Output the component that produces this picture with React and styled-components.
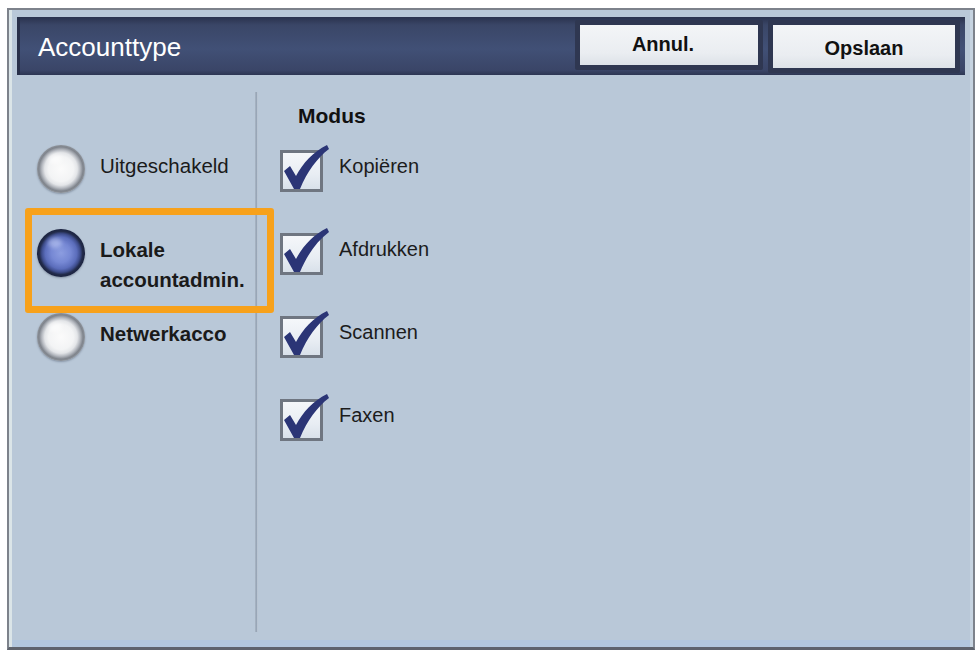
import React from "react";
import styled, { createGlobalStyle } from "styled-components";

const Global = createGlobalStyle`
  html, body { margin: 0; padding: 0; background: #ffffff; }
  body { font-family: "Liberation Sans", Arial, sans-serif; }
`;

const Page = styled.div`
  width: 979px;
  height: 653px;
  padding: 8px 4px 3px 7px;
  box-sizing: border-box;
`;

const Panel = styled.div`
  height: 100%;
  box-sizing: border-box;
  display: flex;
  flex-direction: column;
  background: #b9c8d8;
  border: 2px solid #7d828b;
  border-bottom: 3px solid #5e636d;
  box-shadow: inset 3px 0 0 #dbe5e8, inset -3px 0 0 #c6d3e0, inset 0 -7px 0 #b2c7de;
`;

const Header = styled.div`
  margin: 7px 8px 0 8px;
  height: 58px;
  display: flex;
  align-items: flex-start;
  gap: 5px;
  padding: 3px 5px 0 21px;
  box-sizing: border-box;
  background: linear-gradient(to bottom, #2a324d 0%, #3a4667 14%, #415076 55%, #3a4567 92%, #2d3653 100%);
  box-shadow: inset 3px 0 0 #283049;
`;

const Title = styled.div`
  flex: 1;
  align-self: center;
  color: #ffffff;
  font-size: 26px;
  line-height: 30px;
  margin-top: -1px;
`;

const Button = styled.div`
  width: ${(p) => p.$w}px;
  height: ${(p) => p.$h}px;
  box-sizing: border-box;
  border: 5px solid #2f3751;
  border-radius: 2px;
  background: linear-gradient(to bottom, #f3f5f7 0%, #eaedf1 70%, #dde2e8 100%);
  display: flex;
  align-items: center;
  justify-content: center;
  padding: ${(p) => p.$pad};
  font-weight: bold;
  font-size: 20px;
  color: #111111;
`;

const Body = styled.div`
  flex: 1;
  display: flex;
  padding: 17px 0 15px;
  min-height: 0;
`;

const LeftCol = styled.div`
  width: 246px;
  box-sizing: border-box;
  padding: 53px 0 0 28px;
  display: flex;
  flex-direction: column;
`;

const Divider = styled.div`
  width: 3px;
  background: linear-gradient(to right, #aab6c4, #98a6b7 50%, #c9d4e0);
`;

const RightCol = styled.div`
  flex: 1;
  padding: 9px 0 0 22px;
  display: flex;
  flex-direction: column;
`;

const RadioRow = styled.div`
  position: relative;
  height: 84px;
  display: flex;
  align-items: flex-start;
  gap: 15px;
`;

const Radio = styled.span`
  flex: none;
  width: 48px;
  height: 48px;
  border-radius: 50%;
  position: relative;
  z-index: 1;
  background: ${(p) =>
    p.$checked
      ? "radial-gradient(circle closest-side at 50% 50%, #8c9de0 0%, #7688d4 40%, #5b6dbb 66%, #3e4d8c 80%, #222b4a 90%, #1b2340 100%)"
      : "radial-gradient(circle closest-side at 50% 50%, #fbfbfb 0%, #f3f4f5 52%, #e3e5e8 68%, #b5b9c0 80%, #7f848c 92%, #8e939a 100%)"};
  box-shadow: 0 1px 2px rgba(40, 50, 70, 0.35);
  &::after {
    content: "";
    position: absolute;
    left: 11px;
    top: 9px;
    width: 14px;
    height: 10px;
    border-radius: 50%;
    background: ${(p) => (p.$checked ? "rgba(200, 212, 250, 0.55)" : "rgba(255, 255, 255, 0.6)")};
    filter: blur(2px);
  }
`;

const RadioLabel = styled.span`
  padding-top: 6px;
  font-size: 20.5px;
  line-height: 30px;
  color: #1a1a1a;
  font-weight: ${(p) => (p.$bold ? "bold" : "normal")};
`;

const Highlight = styled.div`
  position: absolute;
  left: -12px;
  top: -21px;
  width: 249px;
  height: 105px;
  box-sizing: border-box;
  border: 7px solid #f7a11b;
  border-radius: 3px;
  z-index: 2;
  pointer-events: none;
`;

const SectionTitle = styled.div`
  padding-left: 18px;
  font-weight: bold;
  font-size: 21px;
  line-height: 30px;
  color: #111111;
  margin-bottom: 19px;
`;

const CheckRow = styled.div`
  height: 83px;
  display: flex;
  align-items: flex-start;
  gap: 16px;
`;

const Box = styled.span`
  flex: none;
  position: relative;
  width: 43px;
  height: 42px;
  box-sizing: border-box;
  border: 3px solid #6f7681;
  background: linear-gradient(to bottom, #f5f7fa 0%, #e8edf3 60%, #d9e1ea 100%);
  & > svg {
    position: absolute;
    left: -3px;
    top: -9px;
    overflow: visible;
  }
`;

const CheckLabel = styled.span`
  padding-top: 1px;
  font-size: 20px;
  line-height: 30px;
  color: #1c1c1c;
`;

const Check = () => (
  <svg width="54" height="54" viewBox="0 -6 54 54">
    <path
      d="M4,21 L10,16 L16,26 C23,13 33,2 47,-5 L49,-1 C37,8 27,22 20,39 L14,39 Z"
      fill="#2b3576"
    />
  </svg>
);

const radios = [
  { label: ["Uitgeschakeld"], bold: false, checked: false },
  { label: ["Lokale", "accountadmin."], bold: true, checked: true },
  { label: ["Netwerkacco"], bold: true, checked: false },
];

const modes = ["Kopiëren", "Afdrukken", "Scannen", "Faxen"];

export default function App() {
  return (
    <Page>
      <Global />
      <Panel>
        <Header>
          <Title>Accounttype</Title>
          <Button $w={188} $h={50} $pad="0 12px 2px 0">Annul.</Button>
          <Button $w={192} $h={53} $pad="4px 0 0 0">Opslaan</Button>
        </Header>
        <Body>
          <LeftCol>
            {radios.map((r) => (
              <RadioRow key={r.label[0]}>
                {r.checked && <Highlight />}
                <Radio $checked={r.checked} />
                <RadioLabel $bold={r.bold}>
                  {r.label.map((l, i) => (
                    <React.Fragment key={l}>
                      {i > 0 && <br />}
                      {l}
                    </React.Fragment>
                  ))}
                </RadioLabel>
              </RadioRow>
            ))}
          </LeftCol>
          <Divider />
          <RightCol>
            <SectionTitle>Modus</SectionTitle>
            {modes.map((m) => (
              <CheckRow key={m}>
                <Box>
                  <Check />
                </Box>
                <CheckLabel>{m}</CheckLabel>
              </CheckRow>
            ))}
          </RightCol>
        </Body>
      </Panel>
    </Page>
  );
}
